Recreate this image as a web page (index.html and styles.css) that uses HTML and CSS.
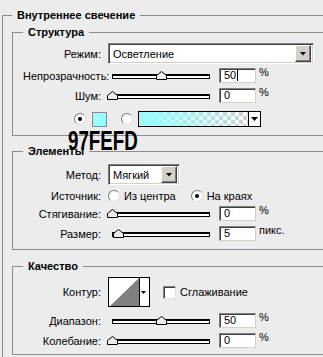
FILE: index.html
```html
<!DOCTYPE html>
<html lang="ru">

<head>
    <meta charset="UTF-8">
    <title>Внутреннее свечение</title>
    <link rel="stylesheet" href="styles.css">
</head>

<body>
    <fieldset class="group outer">
        <legend>Внутреннее свечение</legend>

        <!-- Структура -->
        <fieldset class="group first">
            <legend>Структура</legend>
            <div class="row tall gap4">
                <span class="label">Режим:</span>
                <div class="select mode">
                    <span class="text">Осветление</span>
                    <span class="drop"><i></i></span>
                </div>
            </div>
            <div class="row gap4">
                <span class="label">Непрозрачность:</span>
                <div class="slider"><span class="thumb" style="left:50%"><svg width="11" height="9"><polygon points="0.5,8.5 0.5,4.5 5.5,0.5 10.5,4.5 10.5,8.5" fill="#ececec" stroke="#000"/></svg></span></div>
                <div class="field">50<span class="caret"></span></div>
                <span class="unit">%</span>
            </div>
            <div class="row">
                <span class="label">Шум:</span>
                <div class="slider"><span class="thumb" style="left:0%"><svg width="11" height="9"><polygon points="0.5,8.5 0.5,4.5 5.5,0.5 10.5,4.5 10.5,8.5" fill="#ececec" stroke="#000"/></svg></span></div>
                <div class="field">0</div>
                <span class="unit">%</span>
            </div>
            <div class="colors">
                <span class="radio on"></span>
                <span class="swatch"></span>
                <span class="radio second"></span>
                <div class="gradient">
                    <span class="fill"></span>
                    <span class="arrow"><i></i></span>
                </div>
            </div>
        </fieldset>

        <!-- Элементы -->
        <fieldset class="group">
            <legend>Элементы</legend>
            <div class="row tall gap6">
                <span class="label">Метод:</span>
                <div class="select method">
                    <span class="text">Мягкий</span>
                    <span class="drop"><i></i></span>
                </div>
            </div>
            <div class="row gap3">
                <span class="label">Источник:</span>
                <span class="radio"></span>
                <span class="option">Из центра</span>
                <span class="radio on next"></span>
                <span class="option">На краях</span>
            </div>
            <div class="row gap3">
                <span class="label">Стягивание:</span>
                <div class="slider"><span class="thumb" style="left:0%"><svg width="11" height="9"><polygon points="0.5,8.5 0.5,4.5 5.5,0.5 10.5,4.5 10.5,8.5" fill="#ececec" stroke="#000"/></svg></span></div>
                <div class="field">0</div>
                <span class="unit">%</span>
            </div>
            <div class="row">
                <span class="label">Размер:</span>
                <div class="slider"><span class="thumb" style="left:6%"><svg width="11" height="9"><polygon points="0.5,8.5 0.5,4.5 5.5,0.5 10.5,4.5 10.5,8.5" fill="#ececec" stroke="#000"/></svg></span></div>
                <div class="field">5</div>
                <span class="unit">пикс.</span>
            </div>
        </fieldset>

        <!-- Качество -->
        <fieldset class="group last">
            <legend>Качество</legend>
            <div class="row contour-row gap4">
                <span class="label">Контур:</span>
                <svg class="contour" width="42" height="30" viewBox="0 0 42 30">
                    <rect x="0.5" y="0.5" width="41" height="29" fill="#fff" stroke="#000"/>
                    <polygon points="2,29 31,1 31,29" fill="#808080"/>
                    <line x1="31.5" y1="0" x2="31.5" y2="30" stroke="#000"/>
                    <polygon points="33,14 38,14 35.5,17" fill="#000"/>
                </svg>
                <span class="check"></span>
                <span class="option">Сглаживание</span>
            </div>
            <div class="row gap6">
                <span class="label">Диапазон:</span>
                <div class="slider"><span class="thumb" style="left:50%"><svg width="11" height="9"><polygon points="0.5,8.5 0.5,4.5 5.5,0.5 10.5,4.5 10.5,8.5" fill="#ececec" stroke="#000"/></svg></span></div>
                <div class="field">50</div>
                <span class="unit">%</span>
            </div>
            <div class="row">
                <span class="label">Колебание:</span>
                <div class="slider"><span class="thumb" style="left:0%"><svg width="11" height="9"><polygon points="0.5,8.5 0.5,4.5 5.5,0.5 10.5,4.5 10.5,8.5" fill="#ececec" stroke="#000"/></svg></span></div>
                <div class="field">0</div>
                <span class="unit">%</span>
            </div>
        </fieldset>
    </fieldset>

    <!-- подпись цвета поверх окна -->
    <div class="hex">97FEFD</div>
</body>

</html>
```

FILE: styles.css
```css
body {
    /* фон окна */
    margin: 0;
    background: #ececec;
    color: #000;
    font: 11px "Liberation Sans", Arial, sans-serif;
    overflow: hidden;
}

.group {
    /* рамка группы */
    margin: 9px 0 0;
    padding: 0 0 8px 10px;
    border: 1px solid #8c8c8c;
    min-width: 0;
}

.group legend {
    padding: 0 5px;
    font-weight: bold;
    line-height: 13px;
}

.outer {
    width: 360px;
    margin: 9px 0 0 2px;
    padding: 0 0 20px 9px;
}

.first {
    margin-top: 4px;
}

.last {
    margin-top: 10px;
    padding-bottom: 6px;
}

.row {
    /* строка: подпись + элемент */
    display: flex;
    align-items: center;
    height: 15px;
    margin-top: 5px;
}

.row.tall {
    height: 21px;
}

.gap3 { margin-top: 3px; }
.gap4 { margin-top: 4px; }
.gap6 { margin-top: 6px; }

.label {
    flex: none;
    width: 78px;
    margin-right: 7px;
    text-align: right;
}

/* выпадающие списки */
.select {
    display: flex;
    align-items: center;
    box-sizing: border-box;
    height: 21px;
    padding: 0 2px 0 4px;
    background: #fff;
    border: 1px solid;
    border-color: #808080 #fff #fff #808080;
    box-shadow: inset 1px 1px 0 #404040, inset -1px -1px 0 #d4d0c8;
}

.select .text {
    flex: 1;
}

.mode {
    width: 206px;
}

.method {
    width: 72px;
}

.drop {
    display: flex;
    align-items: center;
    justify-content: center;
    box-sizing: border-box;
    width: 16px;
    height: 17px;
    background: #d4d0c8;
    border: 1px solid;
    border-color: #fff #404040 #404040 #fff;
    box-shadow: inset -1px -1px 0 #808080;
}

.drop i,
.arrow i {
    width: 7px;
    height: 4px;
    background: #000;
    clip-path: polygon(0 0, 100% 0, 50% 100%);
}

/* ползунки */
.slider {
    flex: none;
    position: relative;
    width: 98px;
    height: 15px;
    margin-left: 4px;
}

.slider::before {
    content: "";
    position: absolute;
    left: 0;
    right: 0;
    top: 6px;
    height: 2px;
    background: #fff;
    border: 1px solid #000;
    border-top-width: 2px;
}

.thumb {
    position: absolute;
    top: 3px;
    margin-left: -5px;
    width: 11px;
    height: 9px;
}

.thumb svg {
    display: block;
}

/* поля ввода */
.field {
    flex: none;
    position: relative;
    box-sizing: border-box;
    width: 37px;
    height: 15px;
    margin-left: 9px;
    padding-left: 4px;
    line-height: 13px;
    background: #fff;
    border: 1px solid;
    border-color: #808080 #d4d0c8 #d4d0c8 #808080;
    box-shadow: inset 1px 1px 0 #404040;
}

.caret {
    display: inline-block;
    width: 1px;
    height: 11px;
    margin-left: 1px;
    vertical-align: -2px;
    background: #000;
}

.unit {
    align-self: flex-start;
    margin: -2px 0 0 3px;
}

/* переключатели */
.radio {
    flex: none;
    position: relative;
    box-sizing: border-box;
    width: 12px;
    height: 12px;
    border-radius: 50%;
    background: #fff;
    border: 1px solid;
    border-color: #7a7a7a #e0e0e0 #e0e0e0 #7a7a7a;
}

.radio.on::after {
    content: "";
    position: absolute;
    left: 3px;
    top: 3px;
    width: 4px;
    height: 4px;
    border-radius: 50%;
    background: #000;
}

.option {
    margin-left: 4px;
}

.radio.next {
    margin-left: 15px;
}

.colors {
    display: flex;
    align-items: center;
    height: 16px;
    margin: 8px 0 0 51px;
}

.swatch {
    box-sizing: border-box;
    width: 15px;
    height: 15px;
    margin-left: 6px;
    background: #97fefd;
    border: 1px solid #8a8a8a;
}

.radio.second {
    margin-left: 14px;
}

.gradient {
    display: flex;
    box-sizing: border-box;
    width: 123px;
    height: 16px;
    margin-left: 5px;
    border: 1px solid #000;
}

.gradient .fill {
    flex: 1;
    background:
        linear-gradient(to right, #97fefd, rgba(151, 254, 253, 0)),
        repeating-conic-gradient(#cfcfcf 0 25%, #fff 0 50%) 0 0 / 8px 8px;
}

.gradient .arrow {
    display: flex;
    align-items: center;
    justify-content: center;
    width: 11px;
    background: #fff;
    border-left: 1px solid #000;
}

/* контур и галочка */
.contour-row {
    height: 30px;
}

.contour {
    display: block;
    flex: none;
}

.check {
    flex: none;
    box-sizing: border-box;
    width: 13px;
    height: 13px;
    margin-left: 13px;
    background: #fff;
    border: 1px solid;
    border-color: #808080 #e0e0e0 #e0e0e0 #808080;
    box-shadow: inset 1px 1px 0 #404040;
}

/* подпись цвета */
.hex {
    position: absolute;
    left: 68px;
    top: 127px;
    font: bold 28px/28px "Liberation Sans", Arial, sans-serif;
    transform: scaleX(0.67);
    transform-origin: 0 0;
}
```
